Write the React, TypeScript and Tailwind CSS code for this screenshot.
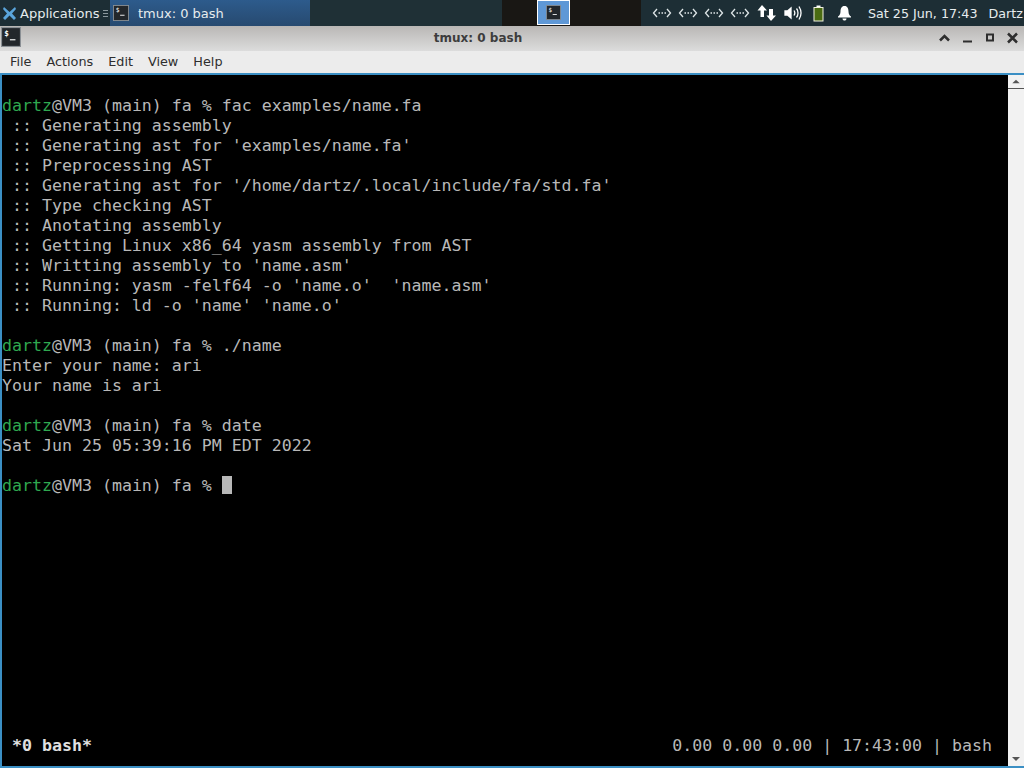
import React from 'react';

const GREEN = 'text-[#2fa84f]';

const LINES: (string | null)[] = [
  '$fac examples/name.fa',
  ' :: Generating assembly',
  " :: Generating ast for 'examples/name.fa'",
  ' :: Preprocessing AST',
  " :: Generating ast for '/home/dartz/.local/include/fa/std.fa'",
  ' :: Type checking AST',
  ' :: Anotating assembly',
  ' :: Getting Linux x86_64 yasm assembly from AST',
  " :: Writting assembly to 'name.asm'",
  " :: Running: yasm -felf64 -o 'name.o'  'name.asm'",
  " :: Running: ld -o 'name' 'name.o'",
  null,
  '$./name',
  'Enter your name: ari',
  'Your name is ari',
  null,
  '$date',
  'Sat Jun 25 05:39:16 PM EDT 2022',
  null,
];

const TermIcon = ({ size = 18 }: { size?: number }) => (
  <svg width={size} height={size} viewBox="0 0 18 18">
    <rect x="0.5" y="0.5" width="17" height="17" fill="#23272b" stroke="#8a8f94" />
    <text x="3" y="8" fontSize="7" fill="#fff" fontFamily="DejaVu Sans Mono">$</text>
    <rect x="8" y="11" width="5" height="1" fill="#fff" />
  </svg>
);

const Tray = () => (
  <svg width="20" height="14" viewBox="0 0 20 14" fill="none" stroke="#dfe6e8" strokeWidth="1.3">
    <path d="M5 3L1.5 7L5 11M15 3L18.5 7L15 11" />
    <path d="M6.5 7H8M9.5 7H11M12.5 7H14" />
  </svg>
);

const Menu = ({ label }: { label: string }) => <span>{label}</span>;

export default function App() {
  return (
    <div className="w-[1024px] h-[768px] flex flex-col overflow-hidden bg-black font-['DejaVu_Sans',sans-serif]">
      {/* panel */}
      <div className="h-[26px] flex items-stretch bg-[#1d2e35] text-[#e6ecee] text-[13px] leading-[25px]">
        <div className="w-[110px] flex items-center pl-[2px] gap-[3px] shrink-0">
          <svg width="15" height="15" viewBox="0 0 15 15">
            <path d="M2 1L7.5 6L13 1L14 3L10 7.5L14 12L12 14L7.5 9.5L3 14L1 12L5 7.5L1 3Z" fill="#5aa5dc" />
          </svg>
          <span>Applications</span>
          <svg className="ml-[1px]" width="5" height="9" viewBox="0 0 5 9" stroke="#8b989d">
            <path d="M0 1.500H5M0 4.500H5M0 7.500H5" />
          </svg>
        </div>
        <div className="w-[200px] flex items-center bg-gradient-to-b from-[#2d5b8c] to-[#274a70] pl-[3px] gap-[9px] shrink-0">
          <TermIcon size={16} />
          <span>tmux: 0 bash</span>
        </div>
        <div className="w-[192px] bg-[#1f3036] shrink-0" />
        <div className="w-[139px] flex items-start bg-[#191714] shrink-0 pl-[35px]">
          <div className="w-[33px] h-[25px] border border-white bg-[#5f98d6] flex items-center justify-center">
            <TermIcon size={15} />
          </div>
        </div>
        <div className="flex-1 flex items-center pl-[11px]">
          <div className="flex gap-[6px] items-center">
            <Tray />
            <Tray />
            <Tray />
            <Tray />
          </div>
          <svg className="ml-[7px]" width="20" height="18" viewBox="0 0 20 18" fill="#fff">
            <path d="M5 1L10 6.5H7V13H3.500V6.500H0.500Z" />
            <path d="M14 17L9.500 11.500H12V5H16V11.500H19Z" />
          </svg>
          <svg className="ml-[7px]" width="18" height="16" viewBox="0 0 18 16" fill="none" stroke="#fff" strokeWidth="1.3">
            <path d="M1 6H3.500L7 3V13L3.500 10H1Z" fill="#fff" />
            <path d="M10 5.500C11 7 11 9 10 10.500M12.500 3.500C14.500 6 14.500 10 12.500 12.500M15 1.500C17.500 5.500 17.500 10.500 15 14.500" />
          </svg>
          <svg className="ml-[11px]" width="12" height="17" viewBox="0 0 12 17">
            <rect x="3.500" y="0.500" width="4" height="2" fill="#fff" />
            <rect x="1" y="2.500" width="9" height="13.500" fill="#4a6b12" stroke="#f2f2e0" />
          </svg>
          <svg className="ml-[12px]" width="15" height="16" viewBox="0 0 15 16" fill="#fff">
            <path d="M7.500 1C10.500 1 11.500 3.500 11.500 6.500C11.500 9 12.500 10.500 14 11.500V12.500H1V11.500C2.500 10.500 3.500 9 3.500 6.500C3.500 3.500 4.500 1 7.500 1Z" />
            <path d="M5.500 13.500H9.500C9.500 15 8.500 15.500 7.500 15.500C6.500 15.500 5.500 15 5.500 13.500Z" />
          </svg>
          <span className="ml-[16px] text-[12.7px] whitespace-nowrap">Sat 25 Jun, 17:43</span>
          <span className="ml-[11px] text-[12.7px]">Dartz</span>
        </div>
      </div>

      {/* title bar */}
      <div className="h-[25px] relative flex items-center justify-center pr-[68px] pb-[1px] bg-gradient-to-b from-[#b9b7b5] to-[#dcdcdc] text-[12px] font-bold text-[#3d3d3d]">
        <div className="absolute left-[1px] top-[1px]">
          <TermIcon size={20} />
        </div>
        <span>tmux: 0 bash</span>
        <div className="absolute right-[5px] top-[5px]">
          <svg width="80" height="14" viewBox="0 0 80 14" fill="none" stroke="#2e2e2e" strokeWidth="2">
            <path d="M1 9.500L5.500 5L10 9.500" strokeWidth="2.500" />
            <path d="M24 10.500H33" />
            <rect x="48" y="3.500" width="6" height="6" />
            <path d="M69 2.500L78 11.500M78 2.500L69 11.500" strokeWidth="2.500" />
          </svg>
        </div>
      </div>

      {/* menu bar */}
      <div className="h-[22px] flex items-center gap-[15px] pl-[10px] bg-[#ececec] text-[12.8px] text-[#2e2e2e] border-b border-[#ececec]">
        <Menu label="File" />
        <Menu label="Actions" />
        <Menu label="Edit" />
        <Menu label="View" />
        <Menu label="Help" />
      </div>

      {/* terminal */}
      <div className="flex-1 min-h-0 flex border-[2px] border-[#3b8fc4] border-r-0 bg-black">
        <div className="flex-1 min-w-0 flex flex-col pt-[21px] pb-[10px] font-['DejaVu_Sans_Mono',monospace] text-[16.6px] leading-[20px] text-[#b8b8b8] whitespace-pre">
          {LINES.map((line, i) =>
            line === null ? (
              <div key={i} className="h-[20px]" />
            ) : line.startsWith('$') ? (
              <div key={i}>
                <span className={GREEN}>dartz</span>@VM3 (main) fa % {line.slice(1)}
              </div>
            ) : (
              <div key={i}>{line}</div>
            ),
          )}
          <div className="flex">
            <span>
              <span className={GREEN}>dartz</span>@VM3 (main) fa %{' '}
            </span>
            <span className="w-[10px] h-[18px] bg-[#b8b8b8]" />
          </div>
          <div className="flex-1" />
          <div className="flex justify-between pl-[10px] pr-[16px]">
            <span className="font-bold text-[#e0e0e0]">*0 bash*</span>
            <span>0.00 0.00 0.00 | 17:43:00 | bash</span>
          </div>
        </div>
        <div className="w-[16px] flex flex-col justify-between bg-[#f2f2f2] shrink-0">
          <svg className="border-b border-[#555]" width="16" height="14" viewBox="0 0 16 14" fill="#555">
            <path d="M4 9L8 5L12 9Z" />
          </svg>
          <svg width="16" height="14" viewBox="0 0 16 14" fill="#555">
            <path d="M4 5L8 9L12 5Z" />
          </svg>
        </div>
      </div>
    </div>
  );
}
